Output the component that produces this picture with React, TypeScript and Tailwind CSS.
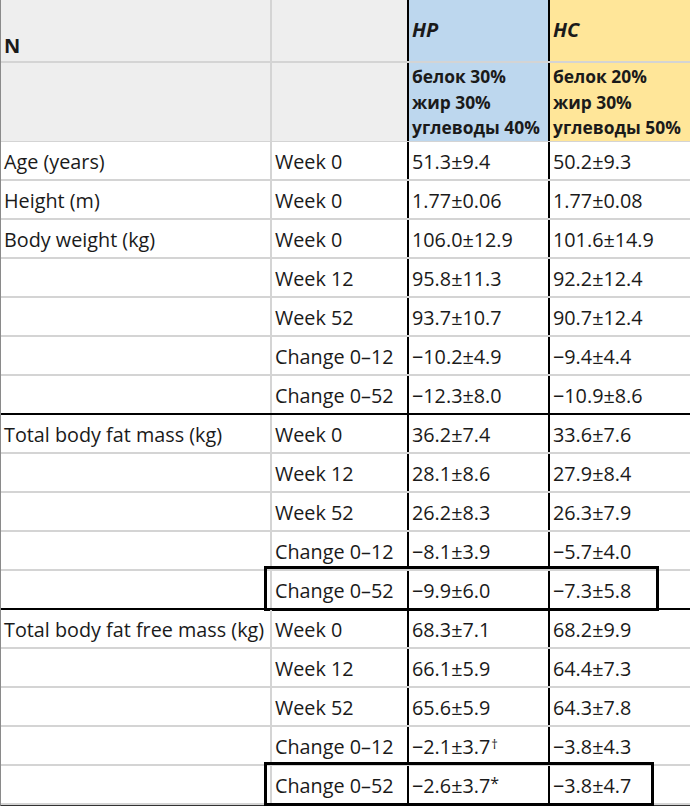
import React from "react";

type Row = {
  label?: string;
  time: string;
  hp: React.ReactNode;
  hc: React.ReactNode;
  sep?: boolean; // black line under the row
  boxTop?: number; // highlight box
};

const rows: Row[] = [
  { label: "Age (years)", time: "Week 0", hp: "51.3±9.4", hc: "50.2±9.3" },
  { label: "Height (m)", time: "Week 0", hp: "1.77±0.06", hc: "1.77±0.08" },
  { label: "Body weight (kg)", time: "Week 0", hp: "106.0±12.9", hc: "101.6±14.9" },
  { time: "Week 12", hp: "95.8±11.3", hc: "92.2±12.4" },
  { time: "Week 52", hp: "93.7±10.7", hc: "90.7±12.4" },
  { time: "Change 0–12", hp: "−10.2±4.9", hc: "−9.4±4.4" },
  { time: "Change 0–52", hp: "−12.3±8.0", hc: "−10.9±8.6", sep: true },
  { label: "Total body fat mass (kg)", time: "Week 0", hp: "36.2±7.4", hc: "33.6±7.6" },
  { time: "Week 12", hp: "28.1±8.6", hc: "27.9±8.4" },
  { time: "Week 52", hp: "26.2±8.3", hc: "26.3±7.9" },
  { time: "Change 0–12", hp: "−8.1±3.9", hc: "−5.7±4.0" },
  { time: "Change 0–52", hp: "−9.9±6.0", hc: "−7.3±5.8", sep: true, boxTop: 1 },
  { label: "Total body fat free mass (kg)", time: "Week 0", hp: "68.3±7.1", hc: "68.2±9.9" },
  { time: "Week 12", hp: "66.1±5.9", hc: "64.4±7.3" },
  { time: "Week 52", hp: "65.6±5.9", hc: "64.3±7.8" },
  {
    time: "Change 0–12",
    hp: (
      <>
        −2.1±3.7<span className="text-[13px] relative top-[-3px] ml-[1px]">†</span>
      </>
    ),
    hc: "−3.8±4.3",
  },
  {
    time: "Change 0–52",
    hp: (
      <>
        −2.6±3.7<span className="text-[16px] relative top-[-3px]">*</span>
      </>
    ),
    hc: "−3.8±4.7",
    boxTop: 2,
  },
];

const cols = "grid grid-cols-[271px_137px_141px_140px]";

export default function App() {
  return (
    <div
      className="w-[690px] h-[806px] bg-white overflow-hidden text-[#1a1a1a]"
      style={{ fontFamily: '"Open Sans", "Noto Sans", sans-serif' }}
    >
      <div className="border-l border-[#8a8a8a] border-b-2 border-b-[#333]">
        {/* header row 1 */}
        <div className={`${cols} h-[63px] border-b-2 border-[#d4d4d4]`}>
          <div className="bg-[#eeeeee] border-r-2 border-[#d4d4d4] pl-[3px] pt-[33px] text-[20px] font-bold leading-[26px]">
            N
          </div>
          <div className="bg-[#eeeeee] border-r-2 border-black" />
          <div className="bg-[#bdd7ee] border-r-2 border-black pl-[3px] pt-[17px] text-[20px] font-bold italic leading-[26px]">
            HP
          </div>
          <div className="bg-[#ffe699] pl-[3px] pt-[17px] text-[20px] font-bold italic leading-[26px]">
            HC
          </div>
        </div>

        {/* header row 2 */}
        <div className={`${cols} h-[79px] border-b-2 border-[#d4d4d4]`}>
          <div className="bg-[#eeeeee] border-r-2 border-[#d4d4d4]" />
          <div className="bg-[#eeeeee] border-r-2 border-black" />
          <div className="bg-[#bdd7ee] border-r-2 border-black pl-[3px] pt-[1px] text-[17.4px] font-bold leading-[25.5px] whitespace-nowrap">
            <div>белок 30%</div>
            <div>жир 30%</div>
            <div>углеводы 40%</div>
          </div>
          <div className="bg-[#ffe699] pl-[3px] pt-[1px] text-[17.4px] font-bold leading-[25.5px] whitespace-nowrap">
            <div>белок 20%</div>
            <div>жир 30%</div>
            <div>углеводы 50%</div>
          </div>
        </div>

        {rows.map((r, i) => (
          <div
            key={i}
            className={`${cols} relative h-[39px] border-b-2 text-[19.8px] leading-none ${
              r.sep ? "border-black" : "border-[#d4d4d4]"
            } ${i === rows.length - 1 ? "border-b-0 h-[37px]" : ""}`}
          >
            <div className="flex items-center pl-[3px] pt-[3px] border-r-2 border-[#d4d4d4] whitespace-nowrap">
              {r.label}
            </div>
            <div className="flex items-center pl-[3px] pt-[3px] border-r-2 border-black whitespace-nowrap">
              {r.time}
            </div>
            <div className="flex items-center pl-[3px] pt-[3px] border-r-2 border-black whitespace-nowrap">
              {r.hp}
            </div>
            <div className="flex items-center pl-[3px] pt-[3px] whitespace-nowrap">{r.hc}</div>

            {r.boxTop === 1 && (
              <div className="absolute left-[263px] top-[-5px] w-[395px] h-[45px] border-[3px] border-black pointer-events-none" />
            )}
            {r.boxTop === 2 && (
              <div className="absolute left-[263px] top-[-4px] w-[390px] h-[44px] border-[3px] border-black pointer-events-none" />
            )}
          </div>
        ))}
      </div>
    </div>
  );
}
